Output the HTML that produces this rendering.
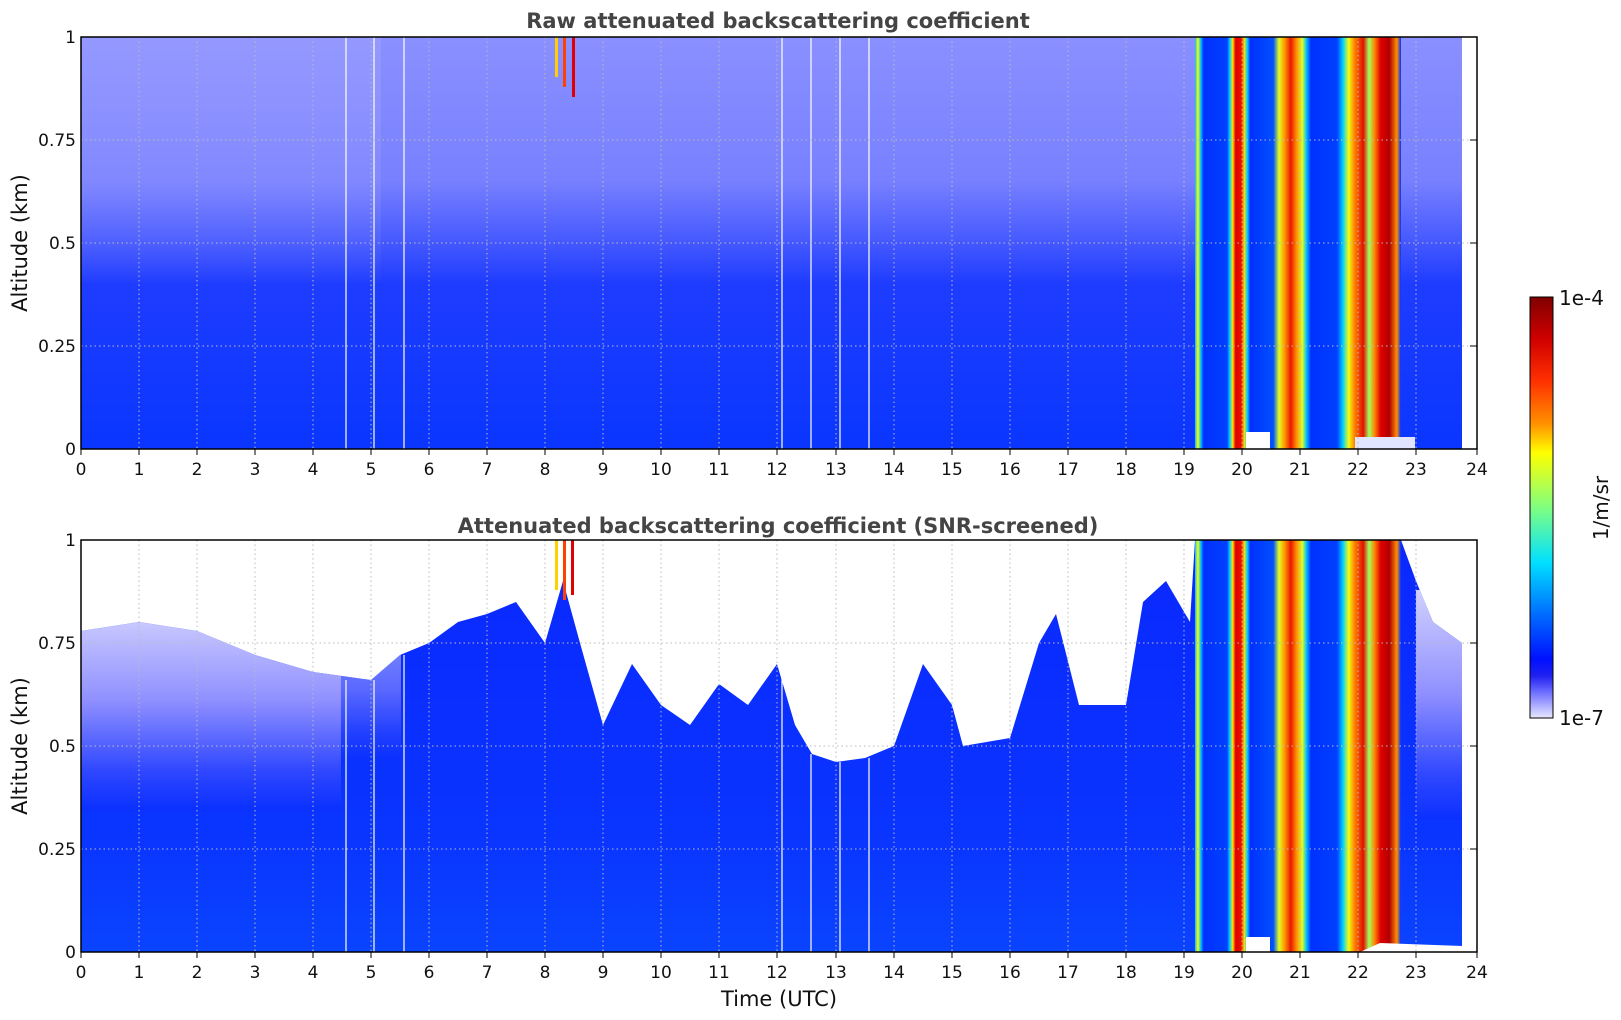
<!DOCTYPE html>
<html><head><meta charset="utf-8"><style>
html,body{margin:0;padding:0;background:#fff;}
svg{display:block;font-family:"DejaVu Sans","Liberation Sans",sans-serif;}
</style></head><body>
<svg width="1621" height="1020" viewBox="0 0 1621 1020" xmlns="http://www.w3.org/2000/svg">
<defs>
<linearGradient id="topv" x1="0" y1="0" x2="0" y2="1">
<stop offset="0" stop-color="#8a90ff"/>
<stop offset="0.35" stop-color="#7880ff"/>
<stop offset="0.5" stop-color="#4458ff"/>
<stop offset="0.6" stop-color="#1e3cff"/>
<stop offset="1" stop-color="#0a36ff"/>
</linearGradient>
<linearGradient id="topl" x1="0" y1="0" x2="0" y2="1">
<stop offset="0" stop-color="#9a9eff" stop-opacity="0.6"/>
<stop offset="1" stop-color="#9a9eff" stop-opacity="0"/>
</linearGradient>
<linearGradient id="cloud" x1="0" y1="0" x2="1" y2="0">
<stop offset="0" stop-color="#00c0ff"/>
<stop offset=".014" stop-color="#ffff00"/>
<stop offset=".028" stop-color="#00c0ff"/>
<stop offset=".042" stop-color="#0030ff"/>
<stop offset=".155" stop-color="#0040ff"/>
<stop offset=".169" stop-color="#00d0ff"/>
<stop offset=".183" stop-color="#ffe000"/>
<stop offset=".197" stop-color="#e00000"/>
<stop offset=".225" stop-color="#e81000"/>
<stop offset=".239" stop-color="#ffe000"/>
<stop offset=".254" stop-color="#00d0ff"/>
<stop offset=".268" stop-color="#0030ff"/>
<stop offset=".38" stop-color="#0050ff"/>
<stop offset=".408" stop-color="#e0ff20"/>
<stop offset=".437" stop-color="#ff9000"/>
<stop offset=".465" stop-color="#e81800"/>
<stop offset=".493" stop-color="#ff9000"/>
<stop offset=".521" stop-color="#e0ff20"/>
<stop offset=".541" stop-color="#00c0ff"/>
<stop offset=".563" stop-color="#0030ff"/>
<stop offset=".69" stop-color="#0040ff"/>
<stop offset=".718" stop-color="#00d0ff"/>
<stop offset=".746" stop-color="#f0ff10"/>
<stop offset=".775" stop-color="#ff8000"/>
<stop offset=".817" stop-color="#e01000"/>
<stop offset=".845" stop-color="#a0ff60"/>
<stop offset=".873" stop-color="#ff8000"/>
<stop offset=".901" stop-color="#e00000"/>
<stop offset=".944" stop-color="#b00000"/>
<stop offset=".98" stop-color="#ff9000"/>
<stop offset="1" stop-color="#0030ff"/>
</linearGradient>
<linearGradient id="lav" x1="0" y1="0" x2="0" y2="1">
<stop offset="0" stop-color="#d0d0ff"/>
<stop offset="0.45" stop-color="#9090ff"/>
<stop offset="0.8" stop-color="#3048ff"/>
<stop offset="1" stop-color="#0a30ff"/>
</linearGradient>
<linearGradient id="botv" x1="0" y1="0" x2="0" y2="1">
<stop offset="0" stop-color="#0a28ff"/>
<stop offset="0.7" stop-color="#0a34ff"/>
<stop offset="1" stop-color="#0a44ff"/>
</linearGradient>
<linearGradient id="cbar" x1="0" y1="0" x2="0" y2="1">
<stop offset="0" stop-color="#800000"/>
<stop offset=".1" stop-color="#d00000"/>
<stop offset=".2" stop-color="#ff3000"/>
<stop offset=".3" stop-color="#ff9000"/>
<stop offset=".37" stop-color="#ffff00"/>
<stop offset=".5" stop-color="#80ff80"/>
<stop offset=".63" stop-color="#00e0ff"/>
<stop offset=".75" stop-color="#0070ff"/>
<stop offset=".86" stop-color="#0010ff"/>
<stop offset=".9" stop-color="#2020f0"/>
<stop offset=".94" stop-color="#7070ff"/>
<stop offset="1" stop-color="#e8e8ff"/>
</linearGradient>
<clipPath id="bclip">
<polygon points="81,631 139,622 197,631 255,655 313,672 371,680 400,655 429,643 458,622 487,614 516,602 545,643 563,581 580,643 603,725 632,664 661,705 690,725 719,684 748,705 777,664 795,725 812,754 836,762 865,758 894,746 923,664 952,705 963,746 1010,738 1039,643 1056,614 1079,705 1126,705 1143,602 1166,581 1190,622 1195,540 1401,540 1416,581 1433,622 1462,643 1462,952 81,952"/>
</clipPath>
</defs>

<!-- TOP PANEL -->
<text x="778" y="28" text-anchor="middle" font-size="21" font-weight="bold" fill="#444">Raw attenuated backscattering coefficient</text>
<rect x="81" y="37" width="1381" height="412" fill="url(#topv)"/>
<rect x="81" y="37" width="300" height="250" fill="url(#topl)"/>
<rect x="1195" y="37" width="206" height="412" fill="url(#cloud)"/>
<rect x="1246" y="432" width="24" height="17" fill="#fff"/>
<rect x="1355" y="437" width="60" height="12" fill="#e0e4ff"/>
<rect x="563" y="37" width="3" height="50" fill="#ff4000"/>
<rect x="572" y="37" width="3" height="60" fill="#e00000"/>
<rect x="555" y="37" width="3" height="40" fill="#ffd000"/>
<g stroke="#fff" stroke-width="1.2">
<line x1="346" y1="37" x2="346" y2="449"/><line x1="374" y1="37" x2="374" y2="449"/><line x1="404" y1="37" x2="404" y2="449"/>
<line x1="782" y1="37" x2="782" y2="449"/><line x1="811" y1="37" x2="811" y2="449"/><line x1="840" y1="37" x2="840" y2="449"/><line x1="869" y1="37" x2="869" y2="449"/>
</g>

<!-- BOTTOM PANEL -->
<text x="778" y="533" text-anchor="middle" font-size="21" font-weight="bold" fill="#444">Attenuated backscattering coefficient (SNR-screened)</text>
<g clip-path="url(#bclip)">
<rect x="81" y="540" width="1381" height="412" fill="url(#botv)"/>
<rect x="81" y="610" width="260" height="200" fill="url(#lav)"/>
<rect x="341" y="630" width="60" height="130" fill="url(#lav)" opacity="0.6"/>
<rect x="1416" y="590" width="46" height="230" fill="url(#lav)"/>
<rect x="1195" y="540" width="206" height="412" fill="url(#cloud)"/>
</g>
<rect x="1246" y="937" width="24" height="15" fill="#fff"/>
<polygon points="1360,952 1462,952 1462,946 1380,943" fill="#fff"/>
<rect x="555" y="540" width="3" height="50" fill="#ffd000"/>
<rect x="563" y="540" width="3" height="60" fill="#ff4000"/>
<rect x="571" y="540" width="3" height="55" fill="#e00000"/>
<g stroke="#fff" stroke-width="1.2">
<line x1="346" y1="680" x2="346" y2="952"/><line x1="374" y1="680" x2="374" y2="952"/><line x1="404" y1="655" x2="404" y2="952"/>
<line x1="782" y1="664" x2="782" y2="952"/><line x1="811" y1="754" x2="811" y2="952"/><line x1="840" y1="762" x2="840" y2="952"/><line x1="869" y1="758" x2="869" y2="952"/>
</g>

<!-- grids -->
<g stroke="#bbbbbb" stroke-width="1" stroke-dasharray="1.5,3">
<g id="vg">
<line x1="139" y1="37" x2="139" y2="449"/><line x1="197" y1="37" x2="197" y2="449"/><line x1="255" y1="37" x2="255" y2="449"/><line x1="313" y1="37" x2="313" y2="449"/><line x1="371" y1="37" x2="371" y2="449"/><line x1="429" y1="37" x2="429" y2="449"/><line x1="487" y1="37" x2="487" y2="449"/><line x1="545" y1="37" x2="545" y2="449"/><line x1="603" y1="37" x2="603" y2="449"/><line x1="661" y1="37" x2="661" y2="449"/><line x1="719" y1="37" x2="719" y2="449"/><line x1="777" y1="37" x2="777" y2="449"/><line x1="836" y1="37" x2="836" y2="449"/><line x1="894" y1="37" x2="894" y2="449"/><line x1="952" y1="37" x2="952" y2="449"/><line x1="1010" y1="37" x2="1010" y2="449"/><line x1="1068" y1="37" x2="1068" y2="449"/><line x1="1126" y1="37" x2="1126" y2="449"/><line x1="1184" y1="37" x2="1184" y2="449"/><line x1="1242" y1="37" x2="1242" y2="449"/><line x1="1300" y1="37" x2="1300" y2="449"/><line x1="1358" y1="37" x2="1358" y2="449"/><line x1="1416" y1="37" x2="1416" y2="449"/>
</g>
<use href="#vg" y="503"/>
<line x1="81" y1="140" x2="1477" y2="140"/><line x1="81" y1="243" x2="1477" y2="243"/><line x1="81" y1="346" x2="1477" y2="346"/>
<line x1="81" y1="643" x2="1477" y2="643"/><line x1="81" y1="746" x2="1477" y2="746"/><line x1="81" y1="849" x2="1477" y2="849"/>
</g>

<!-- axes frames -->
<rect x="81" y="37" width="1396" height="412" fill="none" stroke="#000" stroke-width="1.5"/>
<rect x="81" y="540" width="1396" height="412" fill="none" stroke="#000" stroke-width="1.5"/>

<!-- ticks -->
<g stroke="#000" stroke-width="1">
<g id="xt">
<line x1="81" y1="449" x2="81" y2="455"/><line x1="139" y1="449" x2="139" y2="455"/><line x1="197" y1="449" x2="197" y2="455"/><line x1="255" y1="449" x2="255" y2="455"/><line x1="313" y1="449" x2="313" y2="455"/><line x1="371" y1="449" x2="371" y2="455"/><line x1="429" y1="449" x2="429" y2="455"/><line x1="487" y1="449" x2="487" y2="455"/><line x1="545" y1="449" x2="545" y2="455"/><line x1="603" y1="449" x2="603" y2="455"/><line x1="661" y1="449" x2="661" y2="455"/><line x1="719" y1="449" x2="719" y2="455"/><line x1="777" y1="449" x2="777" y2="455"/><line x1="836" y1="449" x2="836" y2="455"/><line x1="894" y1="449" x2="894" y2="455"/><line x1="952" y1="449" x2="952" y2="455"/><line x1="1010" y1="449" x2="1010" y2="455"/><line x1="1068" y1="449" x2="1068" y2="455"/><line x1="1126" y1="449" x2="1126" y2="455"/><line x1="1184" y1="449" x2="1184" y2="455"/><line x1="1242" y1="449" x2="1242" y2="455"/><line x1="1300" y1="449" x2="1300" y2="455"/><line x1="1358" y1="449" x2="1358" y2="455"/><line x1="1416" y1="449" x2="1416" y2="455"/><line x1="1477" y1="449" x2="1477" y2="455"/>
</g>
<use href="#xt" y="503"/>
<line x1="1470" y1="140" x2="1477" y2="140"/><line x1="1470" y1="243" x2="1477" y2="243"/><line x1="1470" y1="346" x2="1477" y2="346"/>
<line x1="1470" y1="643" x2="1477" y2="643"/><line x1="1470" y1="746" x2="1477" y2="746"/><line x1="1470" y1="849" x2="1477" y2="849"/>
</g>

<!-- tick labels -->
<g font-size="17" fill="#111" text-anchor="middle">
<g id="xl">
<text x="81" y="475">0</text><text x="139" y="475">1</text><text x="197" y="475">2</text><text x="255" y="475">3</text><text x="313" y="475">4</text><text x="371" y="475">5</text><text x="429" y="475">6</text><text x="487" y="475">7</text><text x="545" y="475">8</text><text x="603" y="475">9</text><text x="661" y="475">10</text><text x="719" y="475">11</text><text x="777" y="475">12</text><text x="836" y="475">13</text><text x="894" y="475">14</text><text x="952" y="475">15</text><text x="1010" y="475">16</text><text x="1068" y="475">17</text><text x="1126" y="475">18</text><text x="1184" y="475">19</text><text x="1242" y="475">20</text><text x="1300" y="475">21</text><text x="1358" y="475">22</text><text x="1416" y="475">23</text><text x="1477" y="475">24</text>
</g>
<use href="#xl" y="503"/>
</g>
<g font-size="17" fill="#111" text-anchor="end">
<text x="76" y="43">1</text><text x="76" y="146">0.75</text><text x="76" y="249">0.5</text><text x="76" y="352">0.25</text><text x="76" y="455">0</text>
<text x="76" y="546">1</text><text x="76" y="649">0.75</text><text x="76" y="752">0.5</text><text x="76" y="855">0.25</text><text x="76" y="958">0</text>
</g>
<text x="27" y="243" font-size="21" fill="#111" text-anchor="middle" transform="rotate(-90 27 243)">Altitude (km)</text>
<text x="27" y="746" font-size="21" fill="#111" text-anchor="middle" transform="rotate(-90 27 746)">Altitude (km)</text>
<text x="779" y="1006" font-size="21" fill="#111" text-anchor="middle">Time (UTC)</text>

<!-- colorbar -->
<rect x="1530" y="297" width="23" height="421" fill="url(#cbar)" stroke="#000" stroke-width="1"/>
<text x="1559" y="305" font-size="20" fill="#111">1e-4</text>
<text x="1559" y="725" font-size="20" fill="#111">1e-7</text>
<text x="1608" y="508" font-size="20" fill="#111" text-anchor="middle" transform="rotate(-90 1608 508)">1/m/sr</text>
</svg>
</body></html>
